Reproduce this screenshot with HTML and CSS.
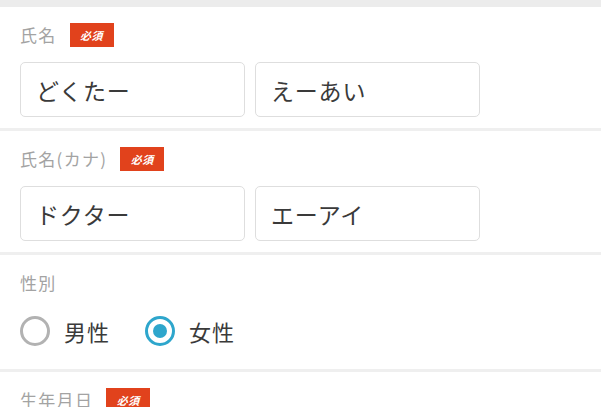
FILE: index.html
```html
<!DOCTYPE html>
<html lang="ja">
<head>
<meta charset="utf-8">
<title>フォーム</title>
<link rel="stylesheet" href="styles.css">
</head>
<body>
<div class="top-band"></div>
<form class="form">
  <section class="field">
    <div class="field-head">
      <span class="label">氏名</span>
      <span class="badge">必須</span>
    </div>
    <div class="inputs">
      <div class="input">どくたー</div>
      <div class="input">えーあい</div>
    </div>
  </section>
  <section class="field">
    <div class="field-head">
      <span class="label">氏名(カナ)</span>
      <span class="badge">必須</span>
    </div>
    <div class="inputs">
      <div class="input">ドクター</div>
      <div class="input">エーアイ</div>
    </div>
  </section>
  <section class="field field-radio">
    <div class="field-head">
      <span class="label">性別</span>
    </div>
    <div class="radios">
      <label class="radio"><span class="dot"></span><span class="radio-text">男性</span></label>
      <label class="radio checked"><span class="dot"></span><span class="radio-text">女性</span></label>
    </div>
  </section>
  <section class="field">
    <div class="field-head">
      <span class="label">生年月日</span>
      <span class="badge">必須</span>
    </div>
  </section>
</form>
</body>
</html>
```
FILE: styles.css
```css
html, body {
  margin: 0;
  padding: 0;
  background: #ffffff;
  font-family: "Noto Sans CJK JP", "Noto Sans", sans-serif;
  color: #383838;
}

.top-band {
  height: 7px;
  background: #ececec;
}

.field {
  padding: 16px 20px 11px;
  border-bottom: 3px solid #efefef;
}

.field-head {
  display: flex;
  align-items: center;
  height: 24px;
  gap: 13px;
}

.label {
  font-size: 17px;
  line-height: 24px;
  color: #a3a3a3;
  letter-spacing: 1.3px;
}

.badge {
  display: flex;
  align-items: center;
  justify-content: center;
  width: 44px;
  height: 24px;
  background: #e1421c;
  color: #ffffff;
  font-size: 11px;
  font-weight: 700;
  font-style: italic;
  letter-spacing: 0.5px;
}

.inputs {
  display: flex;
  gap: 10px;
  margin-top: 15px;
}

.input {
  box-sizing: border-box;
  width: 225px;
  height: 55px;
  border: 1px solid #dedede;
  border-radius: 5px;
  padding-left: 15px;
  display: flex;
  align-items: center;
  font-size: 23px;
  letter-spacing: 0.8px;
  color: #3a3a3a;
}

.field-radio {
  padding-bottom: 23px;
}

.radios {
  display: flex;
  align-items: center;
  gap: 35px;
  margin-top: 21px;
  height: 30px;
}

.radio {
  display: flex;
  align-items: center;
  gap: 14px;
}

.dot {
  box-sizing: border-box;
  width: 30px;
  height: 30px;
  border-radius: 50%;
  border: 3px solid #b2b2b2;
  display: flex;
  align-items: center;
  justify-content: center;
}

.radio.checked .dot {
  border: 3.5px solid #2ea6cc;
}

.radio.checked .dot::after {
  content: "";
  width: 14px;
  height: 14px;
  border-radius: 50%;
  background: #2ea6cc;
}

.radio-text {
  font-size: 22px;
  letter-spacing: 1px;
  color: #3a3a3a;
  line-height: 30px;
}
```
